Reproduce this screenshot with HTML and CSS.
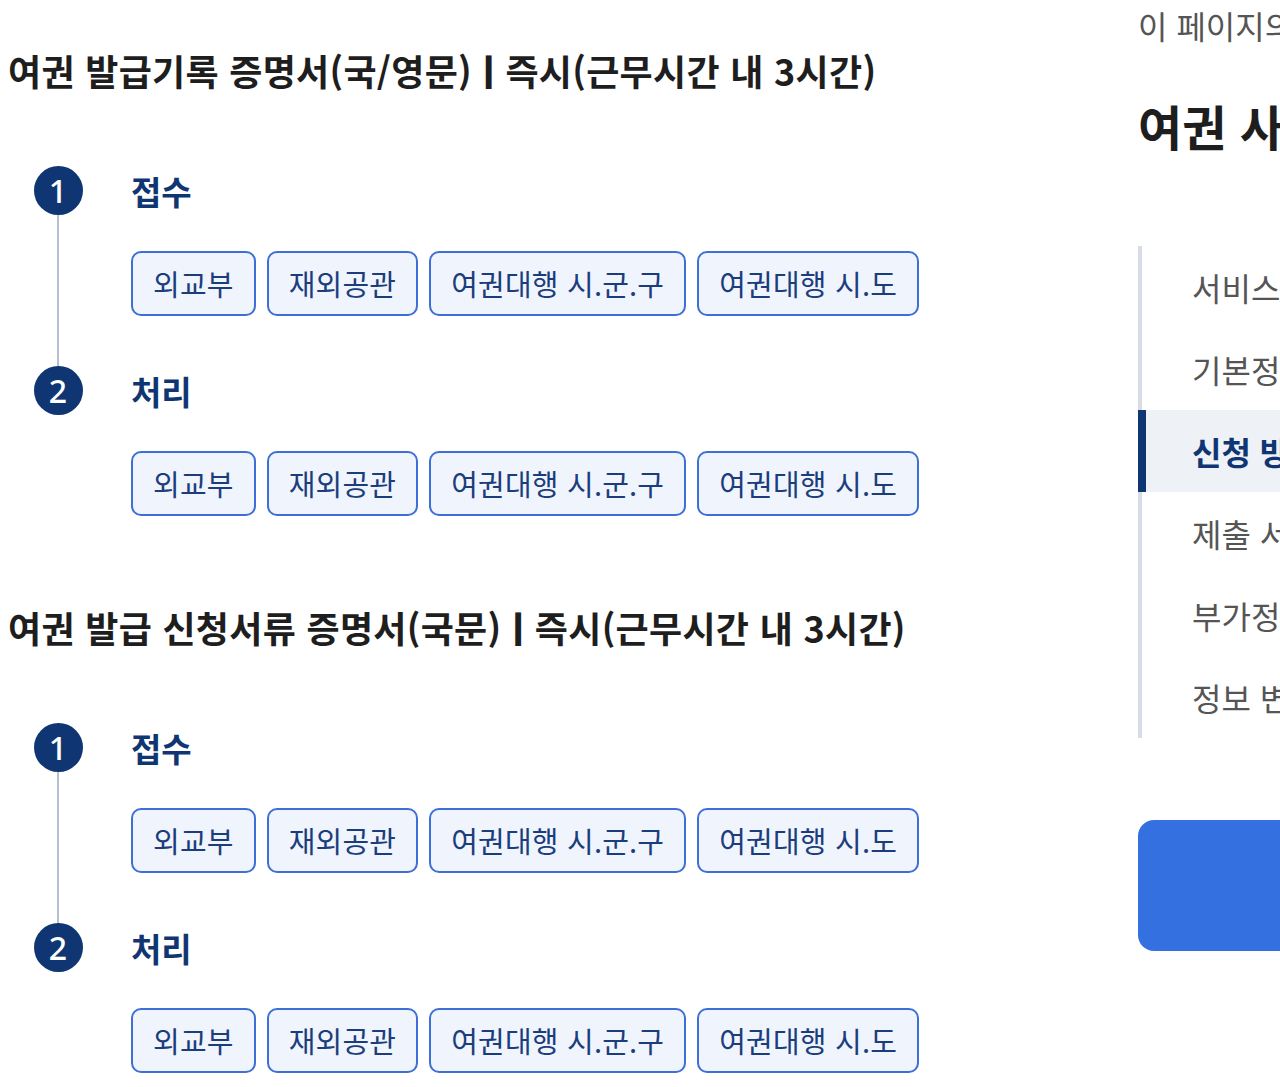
FILE: index.html
```html
<!DOCTYPE html>
<html lang="ko">
<head>
<meta charset="utf-8">
<title>여권 발급기록 증명서</title>
<link rel="stylesheet" href="styles.css">
</head>
<body>
<div class="page">
  <main class="content">
    <section class="service">
      <h2 class="service-title">여권 발급기록 증명서(국/영문)<span class="sep">ㅣ</span>즉시(근무시간 내 3시간)</h2>
      <ol class="steps">
        <li class="step">
          <div class="rail"><span class="num">1</span><span class="line"></span></div>
          <div class="body">
            <h3 class="step-title">접수</h3>
            <div class="tags">
              <span class="tag">외교부</span><span class="tag">재외공관</span><span class="tag">여권대행 시.군.구</span><span class="tag">여권대행 시.도</span>
            </div>
          </div>
        </li>
        <li class="step">
          <div class="rail"><span class="num">2</span></div>
          <div class="body">
            <h3 class="step-title">처리</h3>
            <div class="tags">
              <span class="tag">외교부</span><span class="tag">재외공관</span><span class="tag">여권대행 시.군.구</span><span class="tag">여권대행 시.도</span>
            </div>
          </div>
        </li>
      </ol>
    </section>
    <section class="service">
      <h2 class="service-title">여권 발급 신청서류 증명서(국문)<span class="sep">ㅣ</span>즉시(근무시간 내 3시간)</h2>
      <ol class="steps">
        <li class="step">
          <div class="rail"><span class="num">1</span><span class="line"></span></div>
          <div class="body">
            <h3 class="step-title">접수</h3>
            <div class="tags">
              <span class="tag">외교부</span><span class="tag">재외공관</span><span class="tag">여권대행 시.군.구</span><span class="tag">여권대행 시.도</span>
            </div>
          </div>
        </li>
        <li class="step">
          <div class="rail"><span class="num">2</span></div>
          <div class="body">
            <h3 class="step-title">처리</h3>
            <div class="tags">
              <span class="tag">외교부</span><span class="tag">재외공관</span><span class="tag">여권대행 시.군.구</span><span class="tag">여권대행 시.도</span>
            </div>
          </div>
        </li>
      </ol>
    </section>
  </main>
  <aside class="side">
    <p class="side-caption">이 페이지의 구성</p>
    <h2 class="side-title">여권 사무 대행기관</h2>
    <ul class="toc">
      <li class="toc-item">서비스 개요</li>
      <li class="toc-item">기본정보</li>
      <li class="toc-item active">신청 방법</li>
      <li class="toc-item">제출 서류</li>
      <li class="toc-item">부가정보</li>
      <li class="toc-item">정보 변경 이력</li>
    </ul>
    <div class="apply-btn"></div>
  </aside>
</div>
</body>
</html>
```
FILE: styles.css
```css
* { box-sizing: border-box; }
html, body { margin: 0; padding: 0; }
body {
  font-family: "Noto Sans CJK KR", "Noto Sans", sans-serif;
  color: #1e1e1e;
  background: #fff;
  overflow: hidden;
  width: 1280px;
  height: 1087px;
}
.page {
  display: flex;
  width: 1280px;
  height: 1087px;
  overflow: hidden;
}
.content {
  width: 1138px;
  flex-shrink: 0;
  padding: 46px 0 0 8px;
}
.service { margin-bottom: 87px; }
.service-title {
  margin: 0 0 72px;
  font-size: 36px;
  line-height: 48px;
  font-weight: 700;
  letter-spacing: 0.3px;
  color: #1e1e1e;
  white-space: nowrap;
}
.sep { font-weight: 900; }
.steps { list-style: none; margin: 0; padding: 0; }
.step {
  display: grid;
  grid-template-columns: 123px 1fr;
}
.step + .step .body { padding-bottom: 0; }
.rail {
  display: flex;
  flex-direction: column;
  align-items: center;
  width: 50px;
  margin-left: 25px;
}
.num {
  width: 49px;
  height: 49px;
  border-radius: 50%;
  background: #0f3672;
  color: #fff;
  font-size: 32px;
  line-height: 49px;
  text-align: center;
  font-weight: 500;
  font-family: "Noto Sans", "Noto Sans CJK KR", sans-serif;
  flex-shrink: 0;
}
.line {
  flex: 1;
  width: 2px;
  background: #b4bfd2;
}
.body { padding-bottom: 50px; }
.step-title {
  margin: 0;
  height: 49px;
  display: flex;
  align-items: center;
  font-size: 33px;
  font-weight: 700;
  color: #0f3672;
}
.tags {
  display: flex;
  gap: 11px;
  margin-top: 36px;
}
.tag {
  height: 65px;
  padding: 0 20px;
  border: 2px solid #3d6fd6;
  border-radius: 10px;
  background: #eff4fd;
  color: #1c3d7c;
  font-size: 29px;
  line-height: 61px;
  letter-spacing: 0.2px;
  white-space: nowrap;
}
.side {
  width: 420px;
  flex-shrink: 0;
  white-space: nowrap;
}
.side-caption {
  margin: 0;
  font-size: 32px;
  line-height: 50px;
  color: #555;
}
.side-title {
  margin: 45px 0 0;
  font-size: 48px;
  line-height: 60px;
  font-weight: 700;
  color: #1e1e1e;
}
.toc {
  list-style: none;
  margin: 91px 0 0;
  padding: 0;
  border-left: 4px solid #d8dce6;
}
.toc-item {
  height: 82px;
  line-height: 82px;
  padding-left: 50px;
  font-size: 32px;
  color: #555;
}
.toc-item.active {
  margin-left: -4px;
  padding-left: 46px;
  border-left: 8px solid #0f3672;
  background: #eef1f6;
  color: #0f3672;
  font-weight: 700;
}
.apply-btn {
  margin-top: 82px;
  height: 131px;
  border-radius: 16px;
  background: #3570e0;
}
```
